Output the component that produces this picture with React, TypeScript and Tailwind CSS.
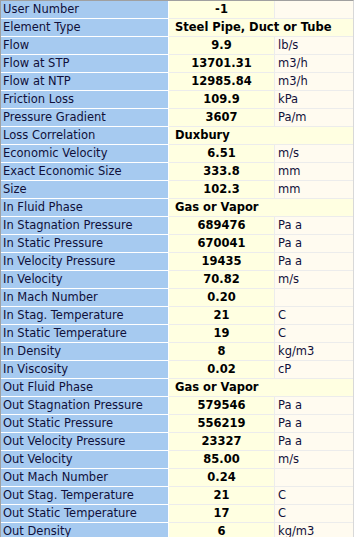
import React from "react";

type Row = { label: string; value: string; unit?: string; span?: boolean };

const rows: Row[] = [
  { label: "User Number", value: "-1", unit: "" },
  { label: "Element Type", value: "Steel Pipe, Duct or Tube", span: true },
  { label: "Flow", value: "9.9", unit: "lb/s" },
  { label: "Flow at STP", value: "13701.31", unit: "m3/h" },
  { label: "Flow at NTP", value: "12985.84", unit: "m3/h" },
  { label: "Friction Loss", value: "109.9", unit: "kPa" },
  { label: "Pressure Gradient", value: "3607", unit: "Pa/m" },
  { label: "Loss Correlation", value: "Duxbury", span: true },
  { label: "Economic Velocity", value: "6.51", unit: "m/s" },
  { label: "Exact Economic Size", value: "333.8", unit: "mm" },
  { label: "Size", value: "102.3", unit: "mm" },
  { label: "In Fluid Phase", value: "Gas or Vapor", span: true },
  { label: "In Stagnation Pressure", value: "689476", unit: "Pa a" },
  { label: "In Static Pressure", value: "670041", unit: "Pa a" },
  { label: "In Velocity Pressure", value: "19435", unit: "Pa a" },
  { label: "In Velocity", value: "70.82", unit: "m/s" },
  { label: "In Mach Number", value: "0.20", unit: "" },
  { label: "In Stag. Temperature", value: "21", unit: "C" },
  { label: "In Static Temperature", value: "19", unit: "C" },
  { label: "In Density", value: "8", unit: "kg/m3" },
  { label: "In Viscosity", value: "0.02", unit: "cP" },
  { label: "Out Fluid Phase", value: "Gas or Vapor", span: true },
  { label: "Out Stagnation Pressure", value: "579546", unit: "Pa a" },
  { label: "Out Static Pressure", value: "556219", unit: "Pa a" },
  { label: "Out Velocity Pressure", value: "23327", unit: "Pa a" },
  { label: "Out Velocity", value: "85.00", unit: "m/s" },
  { label: "Out Mach Number", value: "0.24", unit: "" },
  { label: "Out Stag. Temperature", value: "21", unit: "C" },
  { label: "Out Static Temperature", value: "17", unit: "C" },
  { label: "Out Density", value: "6", unit: "kg/m3" },
];

export default function App() {
  return (
    <div
      className="w-[354px] h-[537px] overflow-hidden bg-white text-[11.5px] leading-[17px]"
      style={{ fontFamily: '"DejaVu Sans", Verdana, sans-serif' }}
    >
      <div className="border-t border-l border-r border-t-[#a0a0a0] border-l-[#a0a0a0] border-r-[#d8d8d8]">
        {rows.map((r, i) => (
          <div key={i} className="flex h-[18px]">
            <div className="w-[168px] shrink-0 bg-[#a6caf0] border-b border-r border-white pl-[2px] text-[#10103a] whitespace-nowrap overflow-hidden">
              {r.label}
            </div>
            {r.span ? (
              <div className="flex-1 bg-[#ffffe1] border-b border-[#ececec] pl-[6px] font-bold text-black whitespace-nowrap overflow-hidden">
                {r.value}
              </div>
            ) : (
              <>
                <div className="w-[106px] shrink-0 bg-[#ffffe1] border-b border-r border-[#ececec] text-center font-bold text-black whitespace-nowrap">
                  {r.value}
                </div>
                <div className="flex-1 bg-[#fffbf0] border-b border-[#ececec] pl-[3px] text-[#10103a] whitespace-nowrap">
                  {r.unit}
                </div>
              </>
            )}
          </div>
        ))}
      </div>
    </div>
  );
}
